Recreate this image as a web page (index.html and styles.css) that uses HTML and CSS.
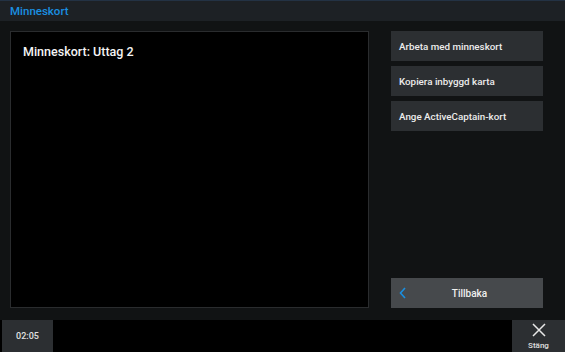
FILE: index.html
```html
<!DOCTYPE html>
<html lang="sv">
<head>
    <meta charset="UTF-8">
    <meta name="viewport" content="width=device-width, initial-scale=1.0">
    <title>Minneskort</title>
    <link rel="stylesheet" href="styles.css">
</head>
<body>
    <div class="screen">
        <div class="header">Minneskort</div>

        <div class="main">
            <div class="panel">
                <div class="panel-title">Minneskort: Uttag 2</div>
            </div>

            <div class="side">
                <button class="menu-btn">Arbeta med minneskort</button>
                <button class="menu-btn">Kopiera inbyggd karta</button>
                <button class="menu-btn">Ange ActiveCaptain-kort</button>
                <div class="spacer"></div>
                <button class="back-btn">
                    <svg class="chevron" width="8" height="12" viewBox="0 0 8 12">
                        <path d="M6 1 L1.5 6 L6 11" fill="none" stroke="#1a8fe0" stroke-width="1.6"/>
                    </svg>
                    <span>Tillbaka</span>
                </button>
            </div>
        </div>

        <div class="footer">
            <div class="clock">02:05</div>
            <button class="close-btn">
                <svg width="14" height="14" viewBox="0 0 14 14">
                    <path d="M1 1 L13 13 M13 1 L1 13" stroke="#e8e8e8" stroke-width="1.5"/>
                </svg>
                <span>Stäng</span>
            </button>
        </div>
    </div>
</body>
</html>
```

FILE: styles.css
```css
body {
    margin: 0;
    background-color: #000;
    font-family: Roboto, "Liberation Sans", sans-serif;
    color: #f0f0f0;
}
.screen {
    width: 565px;
    height: 352px;
    display: flex;
    flex-direction: column;
    overflow: hidden;
    background: linear-gradient(to right, #0d1a2a 0, #111314 3px);
}
.header {
    height: 21px;
    box-sizing: border-box;
    padding: 3px 10px 0;
    background-color: #1d2125;
    border-top: 1px solid #233244;
    color: #1a8fe0;
    font-size: 11.5px;
    font-weight: 500;
}
.main {
    flex: 1;
    display: flex;
    padding: 10px 22px 12px 10px;
    gap: 22px;
    background-color: #111314;
}
.panel {
    width: 359px;
    box-sizing: border-box;
    background-color: #000;
    border: 1px solid #2a2c2e;
    padding: 12px 12px;
}
.panel-title {
    font-size: 12.5px;
    font-weight: 500;
    color: #f4f4f4;
}
.side {
    flex: 1;
    display: flex;
    flex-direction: column;
    gap: 5px;
}
.menu-btn {
    height: 30px;
    border: none;
    background-color: #2c2f32;
    color: #ececec;
    font-family: inherit;
    font-size: 9.8px;
    font-weight: 500;
    text-align: left;
    padding: 0 8px;
}
.spacer {
    flex: 1;
}
.back-btn {
    height: 30px;
    border: none;
    background-color: #46494c;
    color: #f0f0f0;
    font-family: inherit;
    font-size: 10px;
    font-weight: 500;
    display: flex;
    align-items: center;
    padding: 0 8px;
    position: relative;
}
.back-btn span {
    flex: 1;
    text-align: center;
    padding-left: 5px;
}
.chevron {
    position: absolute;
    left: 8px;
}
.footer {
    height: 32px;
    display: flex;
    justify-content: space-between;
    background-color: #000;
    padding-left: 2px;
}
.clock {
    width: 51px;
    background-color: #2c2f32;
    color: #e0e0e0;
    font-size: 9px;
    font-weight: 500;
    display: flex;
    align-items: center;
    justify-content: center;
}
.close-btn {
    width: 53px;
    border: none;
    background-color: #2c2f32;
    color: #e0e0e0;
    font-family: inherit;
    font-size: 8px;
    font-weight: 500;
    display: flex;
    flex-direction: column;
    align-items: center;
    padding: 3px 0 0;
    gap: 4px;
}
```
